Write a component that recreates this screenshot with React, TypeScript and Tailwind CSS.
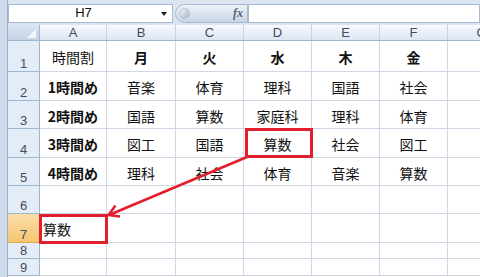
import React from "react";

type Cell = { t: string; b?: boolean; left?: boolean };

const colWidths = [67, 69, 68, 68, 68, 68, 68];
const letters = ["A", "B", "C", "D", "E", "F", "G"];
const rowHeights = [31, 29, 28, 29, 28, 28, 29, 16, 17];

const E: Cell = { t: "" };
const rows: Cell[][] = [
  [{ t: "時間割" }, { t: "月", b: true }, { t: "火", b: true }, { t: "水", b: true }, { t: "木", b: true }, { t: "金", b: true }, E],
  [{ t: "1時間め", b: true }, { t: "音楽" }, { t: "体育" }, { t: "理科" }, { t: "国語" }, { t: "社会" }, E],
  [{ t: "2時間め", b: true }, { t: "国語" }, { t: "算数" }, { t: "家庭科" }, { t: "理科" }, { t: "体育" }, E],
  [{ t: "3時間め", b: true }, { t: "図工" }, { t: "国語" }, { t: "算数" }, { t: "社会" }, { t: "図工" }, E],
  [{ t: "4時間め", b: true }, { t: "理科" }, { t: "社会" }, { t: "体育" }, { t: "音楽" }, { t: "算数" }, E],
  [E, E, E, E, E, E, E],
  [{ t: "算数", left: true }, E, E, E, E, E, E],
  [E, E, E, E, E, E, E],
  [E, E, E, E, E, E, E],
];

const jp = { fontFamily: '"Noto Sans CJK JP", "Noto Sans", sans-serif' };
const hdr = { fontFamily: '"Liberation Sans", Arial, sans-serif' };

export default function App() {
  return (
    <div className="relative w-[480px] h-[277px] overflow-hidden flex bg-white">
      {/* left window strip */}
      <div className="w-[8px] shrink-0 h-full bg-[#cfdbeb] border-r border-[#9fb3cc]" />
      <div className="flex-1 flex flex-col min-w-0">
        {/* formula bar */}
        <div className="h-[25px] shrink-0 bg-[#dbe5f1] flex items-center pt-[1px]">
          <div className="h-[19px] w-[165px] shrink-0 bg-white border border-[#a7bad3] flex items-center relative">
            <span className="flex-1 text-center text-[13px] text-[#111] pr-[14px]" style={hdr}>
              H7
            </span>
            <span className="absolute right-[5px] top-[7px] w-0 h-0 border-l-[3px] border-r-[3px] border-t-[4px] border-l-transparent border-r-transparent border-t-[#222]" />
          </div>
          <div className="ml-[2px] h-[19px] w-[73px] shrink-0 rounded-l-full bg-gradient-to-b from-[#eef2f8] to-[#c8d4e4] border border-[#a7bad3] flex items-center justify-between pl-[3px] pr-[4px]">
            <span className="w-[11px] h-[11px] rounded-full bg-gradient-to-br from-[#f4f6f9] to-[#aab6c6] border border-[#b6c2d2]" />
            <span className="text-[12px] italic font-bold text-[#56657a]" style={{ fontFamily: '"Liberation Serif", serif' }}>
              fx
            </span>
          </div>
          <div className="h-[19px] flex-1 bg-white border border-[#a7bad3]" />
        </div>
        {/* column headers */}
        <div className="flex h-[16px] shrink-0 border-b border-[#9eb6ce]">
          <div className="w-[32px] shrink-0 bg-gradient-to-b from-[#d9e3f0] to-[#c3d2e6] border-r border-[#9eb6ce] relative">
            <span className="absolute right-[3px] bottom-[2px] w-0 h-0 border-l-[9px] border-t-[9px] border-l-transparent border-t-transparent border-r-0 border-b-0" style={{ borderBottom: "9px solid #f3f6fa", borderLeft: "9px solid transparent", borderTop: "0", width: 0, height: 0 }} />
          </div>
          {colWidths.map((w, i) => (
            <div
              key={i}
              className="shrink-0 bg-gradient-to-b from-[#f7f9fc] to-[#dde6f2] border-r border-[#c6d3e3] flex items-center justify-center text-[13px] text-[#3e4d63]"
              style={{ width: w, ...hdr }}
            >
              {letters[i]}
            </div>
          ))}
        </div>
        {/* rows */}
        {rows.map((r, ri) => (
          <div key={ri} className="flex shrink-0" style={{ height: rowHeights[ri] }}>
            <div
              className={
                ri === 6
                  ? "w-[32px] shrink-0 bg-gradient-to-b from-[#fbdfa7] to-[#f6c670] border-r border-b border-[#e0a94a] flex items-end justify-center text-[13px] text-[#3e4d63] leading-none pb-[1px]"
                  : "w-[32px] shrink-0 bg-[#e4ecf7] border-r border-b border-[#9eb6ce] flex items-end justify-center text-[13px] text-[#3e4d63] leading-none pb-[1px]"
              }
              style={hdr}
            >
              {ri + 1}
            </div>
            {r.map((c, ci) => (
              <div
                key={ci}
                className={
                  (c.left ? "justify-start pl-[3px] " : "justify-center ") +
                  (c.b ? "font-bold " : "") +
                  "shrink-0 border-r border-b border-[#d0d7e5] flex items-center pt-[2px] text-[14px] text-[#111] leading-none whitespace-nowrap"
                }
                style={{ width: colWidths[ci], ...jp }}
              >
                {c.t}
              </div>
            ))}
          </div>
        ))}
      </div>

      {/* red highlight boxes */}
      <div className="absolute left-[245px] top-[128px] w-[68px] h-[30px] border-[3px] border-[#e31e2c]" />
      <div className="absolute left-[39px] top-[214px] w-[69px] h-[30px] border-[3px] border-[#e31e2c]" />
      {/* arrow */}
      <svg className="absolute inset-0 pointer-events-none" width="480" height="277" viewBox="0 0 480 277">
        <line x1="247" y1="157" x2="109" y2="215" stroke="#e31e2c" strokeWidth="2.5" />
        <polyline points="120,216.5 108.5,215 115.5,205.5" fill="none" stroke="#e31e2c" strokeWidth="2.5" strokeLinejoin="miter" />
      </svg>
    </div>
  );
}
